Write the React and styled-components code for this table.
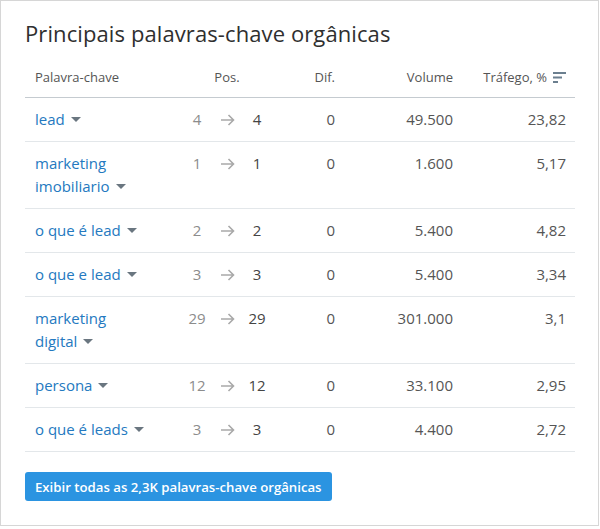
import React from 'react'
import styled, {createGlobalStyle} from 'styled-components'

const GlobalStyle = createGlobalStyle`
    body {
        margin: 0;
        background: #ffffff;
        font-family: "Open Sans", "Noto Sans", sans-serif;
    }
`

const rows = [
    {kw: ['lead'], from: 4, to: 4, dif: 0, volume: '49.500', traffic: '23,82'},
    {kw: ['marketing', 'imobiliario'], from: 1, to: 1, dif: 0, volume: '1.600', traffic: '5,17'},
    {kw: ['o que é lead'], from: 2, to: 2, dif: 0, volume: '5.400', traffic: '4,82'},
    {kw: ['o que e lead'], from: 3, to: 3, dif: 0, volume: '5.400', traffic: '3,34'},
    {kw: ['marketing', 'digital'], from: 29, to: 29, dif: 0, volume: '301.000', traffic: '3,1'},
    {kw: ['persona'], from: 12, to: 12, dif: 0, volume: '33.100', traffic: '2,95'},
    {kw: ['o que é leads'], from: 3, to: 3, dif: 0, volume: '4.400', traffic: '2,72'},
]

const SortIcon = () => (
    <svg width="13" height="11" viewBox="0 0 13 11">
        <rect x="0" y="0" width="13" height="2" fill="#6b7f8f" />
        <rect x="0" y="4.5" width="9" height="2" fill="#6b7f8f" />
        <rect x="0" y="9" width="5" height="2" fill="#6b7f8f" />
    </svg>
)

const ArrowIcon = () => (
    <svg width="15" height="12" viewBox="0 0 15 12">
        <path d="M1 6 H13.5 M8.5 1 L13.5 6 L8.5 11" fill="none" stroke="#a9a9a9" strokeWidth="1.6" />
    </svg>
)

const Keywords = () => {
    return (
        <>
            <GlobalStyle />
            <Card>
                <Title>Principais palavras-chave orgânicas</Title>
                <Table>
                    <HeadRow>
                        <Cell>Palavra-chave</Cell>
                        <Cell align="center">Pos.</Cell>
                        <Cell align="right">Dif.</Cell>
                        <Cell align="right">Volume</Cell>
                        <Cell align="right">
                            <Sortable>Tráfego, % <SortIcon /></Sortable>
                        </Cell>
                    </HeadRow>

                    {rows.map((r, i) => (
                        <Row key={i}>
                            <Cell>
                                <Keyword>
                                    {r.kw.map((w, j) => (
                                        <span key={j}>
                                            {w}
                                            {j === r.kw.length - 1 ? <Caret /> : <br />}
                                        </span>
                                    ))}
                                </Keyword>
                            </Cell>
                            <Cell>
                                <Position>
                                    <Num tone="old">{r.from}</Num>
                                    <Arrow><ArrowIcon /></Arrow>
                                    <Num>{r.to}</Num>
                                </Position>
                            </Cell>
                            <Cell align="right">{r.dif}</Cell>
                            <Cell align="right">{r.volume}</Cell>
                            <Cell align="right">{r.traffic}</Cell>
                        </Row>
                    ))}
                </Table>
                <Button>Exibir todas as 2,3K palavras-chave orgânicas</Button>
            </Card>
        </>
    )
}

const Card = styled.div`
    box-sizing: border-box;
    width: 599px;
    height: 526px;
    border: 1px solid #d6d6d6;
    padding: 17px 23px 24px 24px;
    background: #fff;
`

const Title = styled.h2`
    margin: 0;
    font-size: 22px;
    font-weight: 400;
    color: #2f2f2f;
    line-height: 30px;
    letter-spacing: 0.1px;
`

const Table = styled.div`
    margin-top: 9px;
`

const columns = `142px 100px 58px 118px 113px`

const HeadRow = styled.div`
    display: grid;
    grid-template-columns: ${columns};
    padding: 0 10px;
    height: 40px;
    align-items: center;
    border-bottom: 1px solid #c5cbd0;
    font-size: 13px;
    color: #555;
`

const Row = styled.div`
    display: grid;
    grid-template-columns: ${columns};
    padding: 10px 10px;
    align-items: start;
    border-bottom: 1px solid #e3e7ea;
    font-size: 15px;
    line-height: 23px;
    color: #555;
`

const Cell = styled.div`
    text-align: ${p => p.align || 'left'};
    white-space: nowrap;
`

const Sortable = styled.span`
    display: inline-flex;
    align-items: center;
    gap: 6px;
`

const Keyword = styled.span`
    color: #2479c0;
`

const Caret = styled.span`
    display: inline-block;
    margin-left: 6px;
    vertical-align: middle;
    width: 0;
    height: 0;
    border-left: 5px solid transparent;
    border-right: 5px solid transparent;
    border-top: 5px solid #6a7680;
    position: relative;
    top: -1px;
`

const Position = styled.div`
    display: flex;
    justify-content: center;
`

const Num = styled.span`
    width: 30px;
    text-align: center;
    color: ${p => (p.tone === 'old' ? '#8c8c8c' : '#444')};
`

const Arrow = styled.span`
    width: 30px;
    display: flex;
    justify-content: center;
    align-items: center;
    height: 23px;
`

const Button = styled.button`
    margin-top: 20px;
    height: 29px;
    padding: 0 10px;
    border: none;
    border-radius: 3px;
    background: #2b94e1;
    color: #fff;
    font-family: "Open Sans", "Noto Sans", sans-serif;
    font-size: 13.2px;
    font-weight: 600;
    cursor: pointer;
`

export default Keywords
